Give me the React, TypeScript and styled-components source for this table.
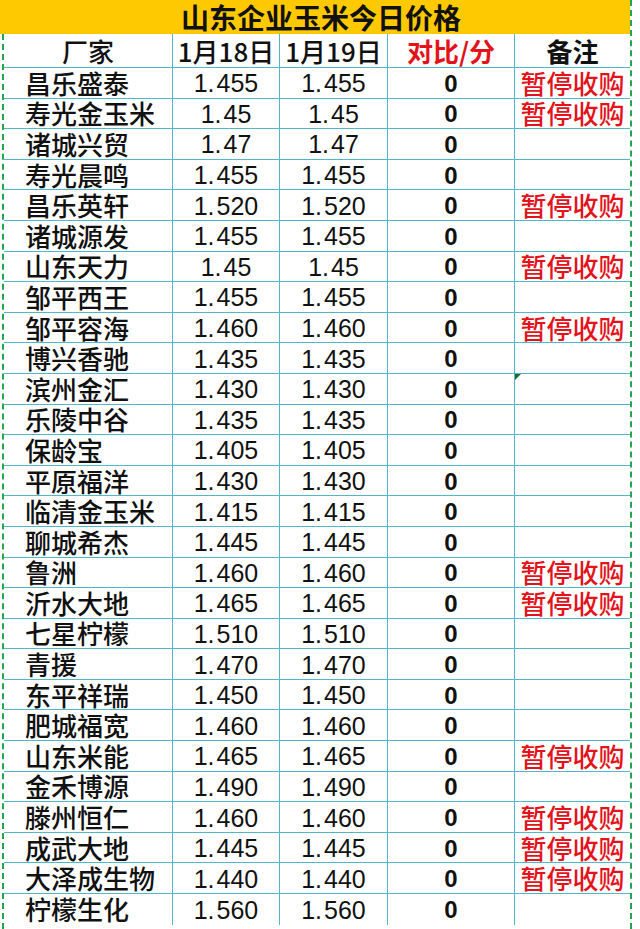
import React from 'react'
import styled, { createGlobalStyle } from 'styled-components'

const GlobalStyle = createGlobalStyle`
  html, body {
    margin: 0;
    padding: 0;
    background: #ffffff;
  }
  body {
    font-family: "Noto Sans CJK SC", "Noto Sans", sans-serif;
    color: #111;
  }
`

type Row = {
  name: string
  d18: string
  d19: string
  note?: boolean
  marker?: boolean
}

const rows: Row[] = [
  { name: '昌乐盛泰', d18: '1.455', d19: '1.455', note: true },
  { name: '寿光金玉米', d18: '1.45', d19: '1.45', note: true },
  { name: '诸城兴贸', d18: '1.47', d19: '1.47' },
  { name: '寿光晨鸣', d18: '1.455', d19: '1.455' },
  { name: '昌乐英轩', d18: '1.520', d19: '1.520', note: true },
  { name: '诸城源发', d18: '1.455', d19: '1.455' },
  { name: '山东天力', d18: '1.45', d19: '1.45', note: true },
  { name: '邹平西王', d18: '1.455', d19: '1.455' },
  { name: '邹平容海', d18: '1.460', d19: '1.460', note: true },
  { name: '博兴香驰', d18: '1.435', d19: '1.435' },
  { name: '滨州金汇', d18: '1.430', d19: '1.430', marker: true },
  { name: '乐陵中谷', d18: '1.435', d19: '1.435' },
  { name: '保龄宝', d18: '1.405', d19: '1.405' },
  { name: '平原福洋', d18: '1.430', d19: '1.430' },
  { name: '临清金玉米', d18: '1.415', d19: '1.415' },
  { name: '聊城希杰', d18: '1.445', d19: '1.445' },
  { name: '鲁洲', d18: '1.460', d19: '1.460', note: true },
  { name: '沂水大地', d18: '1.465', d19: '1.465', note: true },
  { name: '七星柠檬', d18: '1.510', d19: '1.510' },
  { name: '青援', d18: '1.470', d19: '1.470' },
  { name: '东平祥瑞', d18: '1.450', d19: '1.450' },
  { name: '肥城福宽', d18: '1.460', d19: '1.460' },
  { name: '山东米能', d18: '1.465', d19: '1.465', note: true },
  { name: '金禾博源', d18: '1.490', d19: '1.490' },
  { name: '滕州恒仁', d18: '1.460', d19: '1.460', note: true },
  { name: '成武大地', d18: '1.445', d19: '1.445', note: true },
  { name: '大泽成生物', d18: '1.440', d19: '1.440', note: true },
  { name: '柠檬生化', d18: '1.560', d19: '1.560' },
]

const GRID = '#4fb9c9'
const RED = '#e3121b'
const DASH = '#24a651'

// number with a wider gap after the dot, like the sheet's font
const Num = ({ value }: { value: string }) => {
  const [a, b] = value.split('.')
  return (
    <NumText>
      {a}
      <Dot>.</Dot>
      {b}
    </NumText>
  )
}

const App = () => {
  return (
    <Page>
      <GlobalStyle />
      <Title>山东企业玉米今日价格</Title>
      <Sheet>
        <HeaderRow>
          <Cell align="center">厂家</Cell>
          <Cell align="center">1月18日</Cell>
          <Cell align="center">1月19日</Cell>
          <Cell align="center" bold red>对比/分</Cell>
          <Cell align="center" bold last>备注</Cell>
        </HeaderRow>
        {rows.map((r, i) => (
          <DataRow key={r.name} final={i === rows.length - 1}>
            <Cell align="left">{r.name}</Cell>
            <Cell align="center"><Num value={r.d18} /></Cell>
            <Cell align="center"><Num value={r.d19} /></Cell>
            <Cell align="center"><Zero>0</Zero></Cell>
            <Cell align="center" red last>
              {r.marker && <Marker />}
              {r.note ? '暂停收购' : ''}
            </Cell>
          </DataRow>
        ))}
      </Sheet>
    </Page>
  )
}

const Page = styled.div`
  width: 630px;
  min-height: 100vh;
  border-right: 2px dashed ${DASH};
  display: flex;
  flex-direction: column;
`

const Title = styled.div`
  height: 34px;
  background: #ffc900;
  display: flex;
  align-items: center;
  justify-content: center;
  padding-left: 12px;
  font-size: 28px;
  font-weight: 700;
  line-height: 1;
  color: #111;
`

const Sheet = styled.div`
  flex: 1;
  border-left: 2px dashed ${DASH};
  margin-left: 2px;
`

const HeaderRow = styled.div`
  display: grid;
  grid-template-columns: 169px 107px 108px 127px 1fr;
  height: 34px;
  border-bottom: 1px solid ${GRID};
  box-sizing: border-box;
  font-size: 26px;
`

const DataRow = styled.div<{ final?: boolean }>`
  display: grid;
  grid-template-columns: 169px 107px 108px 127px 1fr;
  height: 30.6px;
  box-sizing: border-box;
  border-bottom: ${(p) => (p.final ? 'none' : `1px solid ${GRID}`)};
  font-size: 26px;
`

const Cell = styled.div<{ align: 'left' | 'center'; bold?: boolean; red?: boolean; last?: boolean }>`
  position: relative;
  display: flex;
  align-items: center;
  justify-content: ${(p) => (p.align === 'left' ? 'flex-start' : 'center')};
  padding-left: ${(p) => (p.align === 'left' ? '21px' : '0')};
  border-right: ${(p) => (p.last ? 'none' : `1px solid ${GRID}`)};
  font-weight: ${(p) => (p.bold ? 700 : 500)};
  color: ${(p) => (p.red ? RED : '#111')};
  white-space: nowrap;
  line-height: 1;
`

const NumText = styled.span`
  font-family: "Liberation Sans", Arial, sans-serif;
  font-size: 25px;
  font-weight: 400;
  color: #111;
  padding-top: 2px;
`

const Dot = styled.span`
  margin-right: 2px;
`

const Zero = styled.span`
  font-family: "Liberation Sans", Arial, sans-serif;
  font-size: 24px;
  font-weight: 700;
  color: #111;
  padding-top: 2px;
`

const Marker = styled.span`
  position: absolute;
  top: 0;
  left: 0;
  width: 0;
  height: 0;
  border-top: 6px solid #1b6e2e;
  border-right: 6px solid transparent;
`

export default App
